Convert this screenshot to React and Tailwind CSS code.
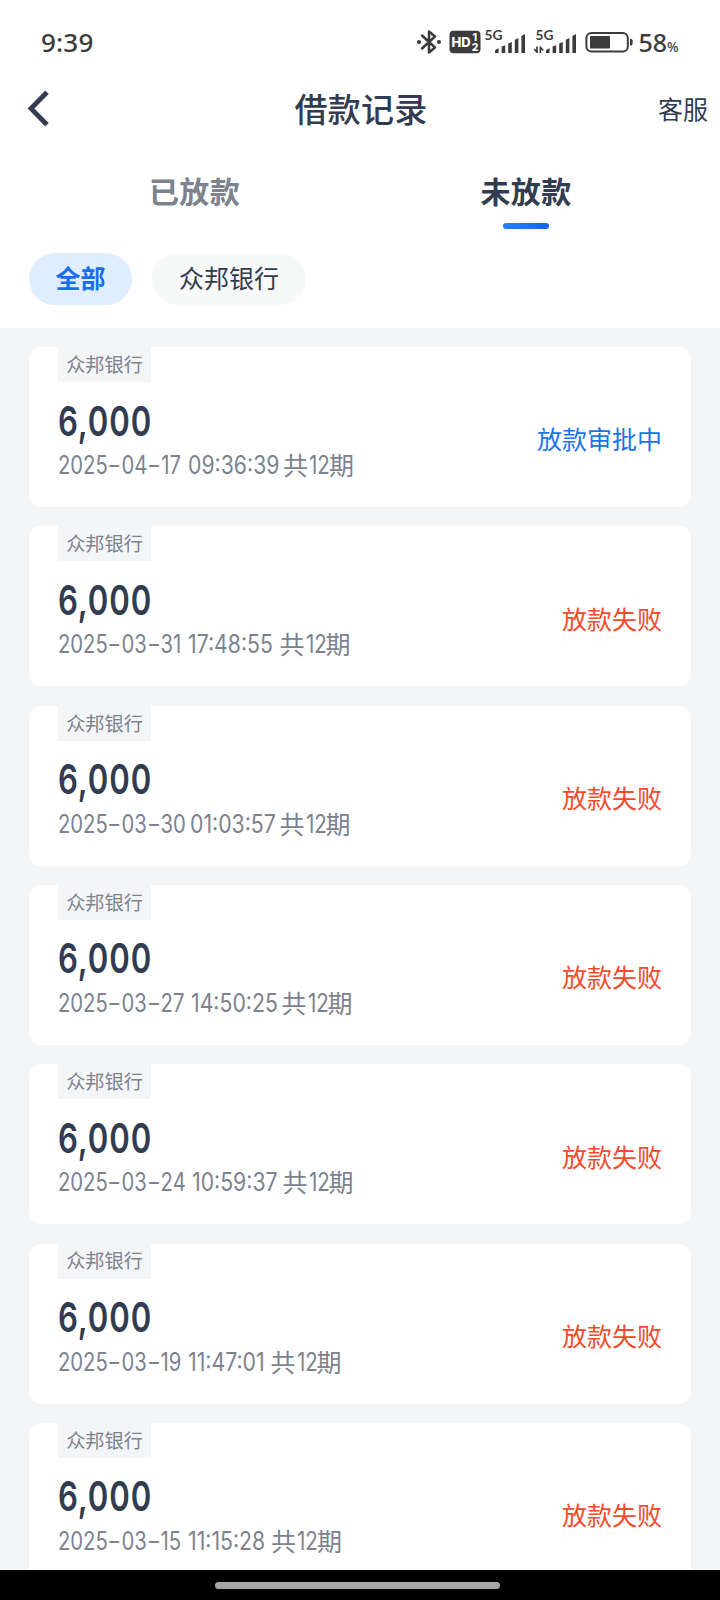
// dateWidth / clockWidth: advance of each part of the proportional date line
const records = [
  { date: "2025-04-17", clock: "09:36:39", dateWidth: 129.5, clockWidth: 95.5, status: "放款审批中", pending: true },
  { date: "2025-03-31", clock: "17:48:55", dateWidth: 130, clockWidth: 91.5, status: "放款失败" },
  { date: "2025-03-30", clock: "01:03:57", dateWidth: 132, clockWidth: 89.5, status: "放款失败" },
  { date: "2025-03-27", clock: "14:50:25", dateWidth: 132.5, clockWidth: 91, status: "放款失败" },
  { date: "2025-03-24", clock: "10:59:37", dateWidth: 134, clockWidth: 90.5, status: "放款失败" },
  { date: "2025-03-19", clock: "11:47:01", dateWidth: 129.5, clockWidth: 83, status: "放款失败" },
  { date: "2025-03-15", clock: "11:15:28", dateWidth: 129.5, clockWidth: 83.5, status: "放款失败" },
];

function SignalBars() {
  return (
    <g>
      <path d="M0 20v-2.5q0-1 3.6-2.2V20z" />
      <path d="M6.6 20v-6.4l3.6-1.3V20z" />
      <path d="M13.2 20v-9.5l3.6-1.5V20z" />
      <path d="M19.8 20V6.8L23.4 5V20z" />
      <path d="M26.4 20V3l3.6-2v19z" />
    </g>
  );
}

function StatusBar() {
  return (
    <div className="flex h-[84px] items-center justify-between pl-[41px] pr-[40px] text-[#3c3c3c]">
      <span className="font-['Noto_Sans','Noto_Sans_CJK_SC',sans-serif] text-[26px] font-medium leading-none tracking-[0.2px]">9:39</span>
      <div className="flex items-center">
        <svg className="h-[28px] w-[26px]" viewBox="0 0 26 28" fill="none" stroke="currentColor" strokeWidth="2.5">
          <path d="M6 7.5 19 19.5l-6 5V3.5l6 5L6 20.5" strokeLinejoin="round" strokeLinecap="round" />
          <circle cx="3" cy="14" r="2" fill="currentColor" stroke="none" />
          <circle cx="23" cy="14" r="2" fill="currentColor" stroke="none" />
        </svg>
        <svg className="ml-[7px] h-[24px] w-[32px]" viewBox="0 0 32 24" fontFamily="Inter, sans-serif" fontWeight="800">
          <rect x="0.5" y="0.7" width="31" height="22.6" rx="4" fill="currentColor" />
          <text x="2.6" y="16.6" fontSize="13" fill="#fff" textLength="19">HD</text>
          <text x="23.6" y="11" fontSize="10.5" fill="#fff">1</text>
          <text x="22.7" y="21.4" fontSize="10.5" fill="#fff">2</text>
        </svg>
        <svg className="ml-[3px] h-[34px] w-[42px]" viewBox="0 -4 42 34" fill="currentColor">
          <text x="0.5" y="11" fontSize="13.5" fontWeight="700" fontFamily="Lato, sans-serif" textLength="18" lengthAdjust="spacingAndGlyphs">5G</text>
          <g transform="translate(11 4)"><SignalBars /></g>
        </svg>
        <svg className="ml-[7px] h-[34px] w-[44px]" viewBox="0 -4 44 34" fill="currentColor">
          <text x="2.5" y="11" fontSize="13.5" fontWeight="700" fontFamily="Lato, sans-serif" textLength="18" lengthAdjust="spacingAndGlyphs">5G</text>
          <path d="M4 17.5V24M4 23.2 1.2 20M7.4 24v-6.5M7.4 18.3l2.8 3.2" fill="none" stroke="currentColor" strokeWidth="1.7" />
          <g transform="translate(13 4)"><SignalBars /></g>
        </svg>
        <svg className="ml-[8px] h-[22px] w-[48px]" viewBox="0 0 48 22">
          <rect x="1.4" y="2" width="41.4" height="18.4" rx="5" fill="none" stroke="currentColor" strokeWidth="2" />
          <rect x="5" y="5" width="20" height="12.5" rx="1" fill="currentColor" />
          <path d="M45 7.7q2.6 0 2.6 1.6v3.8q0 1.6-2.6 1.6z" fill="currentColor" />
        </svg>
        <span className="ml-[5px] flex items-baseline font-['Noto_Sans',sans-serif] text-[25px] font-medium leading-none">
          58<span className="w-[13px] origin-left scale-x-[0.9] text-[15px]">%</span>
        </span>
      </div>
    </div>
  );
}

function Dash() {
  return <span className="inline-block w-[17px] scale-x-[1.5] text-center">-</span>;
}

function RecordDate({ date, width }) {
  const [year, month, day] = date.split("-");
  return (
    <span className="flex" style={{ width }}>
      <span className="origin-left scale-x-[0.81]">
        {year}<Dash />{month}<Dash />{day}
      </span>
    </span>
  );
}

function RecordCard({ date, clock, dateWidth, clockWidth, status, pending }) {
  return (
    <li className="flex h-[160px] shrink-0 items-stretch justify-between rounded-[12px] bg-white px-[29px]">
      <div className="flex flex-col items-start">
        <span className="flex h-[35px] w-[93px] items-center justify-center bg-[#f4f5f7] text-[19.2px] leading-none text-[#7c828e]">众邦银行</span>
        <span className="mt-[16px] flex h-[46px] w-[116px] origin-left scale-x-[0.76] items-center font-[Inter,sans-serif] text-[41px] font-semibold leading-none tracking-[1.2px] text-[#323c50]">6,000</span>
        <div className="mt-px flex h-[41px] items-center whitespace-nowrap font-[Inter,sans-serif] text-[25px] font-normal leading-none tracking-normal text-[#7c828e]">
          <RecordDate date={date} width={dateWidth} />
          <span className="flex" style={{ width: clockWidth }}>
            <span className="origin-left scale-x-[0.85]">{clock}</span>
          </span>
          <span className="pb-[2px] font-['Noto_Sans_CJK_SC',sans-serif]">共</span>
          <span className="w-[21px] origin-left translate-x-px scale-x-[0.82]">12</span>
          <span className="pb-[2px] font-['Noto_Sans_CJK_SC',sans-serif]">期</span>
        </div>
      </div>
      <span className={pending ? "flex items-center pt-[24px] text-[25px] text-[#1a73ee]" : "flex items-center pt-[24px] text-[25px] text-[#f54a2c]"}>{status}</span>
    </li>
  );
}

export default function App() {
  return (
    <div className="flex h-[1600px] w-[720px] flex-col overflow-hidden bg-[#f4f5f7] font-['Noto_Sans_CJK_SC',sans-serif]">
      <header className="h-[328px] shrink-0 bg-white text-[#323c50]">
        <StatusBar />
        <div className="grid h-[50px] grid-cols-3 items-center">
          <svg className="ml-[26px] h-[38px] w-[26px]" viewBox="0 0 26 38" fill="none" stroke="currentColor" strokeWidth="4.8">
            <path d="M21 2.2 5 18.5l16 16.3" />
          </svg>
          <h1 className="ml-[2px] pb-[2px] text-center text-[33px] font-medium leading-none tracking-[0.3px]">借款记录</h1>
          <span className="pb-[2px] pr-[12px] text-right text-[25px] leading-none">客服</span>
        </div>
        <nav className="flex h-[119px] px-[29px] text-[30px] font-bold leading-none tracking-[0.4px]">
          <span className="w-1/2 pt-[41px] text-center text-[#7c828e]">已放款</span>
          <span className="flex w-1/2 flex-col items-center pl-px pt-[41px]">
            未放款
            <i className="mt-[18px] h-[6px] w-[46px] rounded-[3px] bg-linear-to-r from-[#2680ff] to-[#1366ee]" />
          </span>
        </nav>
        <div className="flex gap-[20px] px-[29px] text-[25px] leading-none">
          <span className="flex h-[52px] w-[103px] items-center justify-center rounded-full bg-[#e0edfe] pb-[3px] font-bold text-[#1a6eee]">全部</span>
          <span className="flex h-[52px] w-[154px] items-center justify-center rounded-full bg-[#f7f8f8] pb-[3px]">众邦银行</span>
        </div>
      </header>
      <ul className="flex min-h-0 flex-1 flex-col gap-[19.3px] overflow-hidden px-[29px] pt-[19.1px]">
        {records.map((record) => (
          <RecordCard key={record.date} {...record} />
        ))}
      </ul>
      <footer className="flex h-[30px] shrink-0 items-center justify-center bg-black">
        <div className="mr-[5px] h-[7px] w-[285px] rounded-full bg-[#a6a6a6]" />
      </footer>
    </div>
  );
}
